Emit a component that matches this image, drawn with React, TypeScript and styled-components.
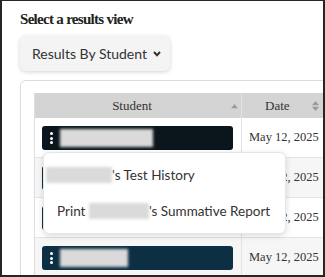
import React from "react";
import styled, { createGlobalStyle } from "styled-components";

const Global = createGlobalStyle`
  html, body { margin: 0; padding: 0; background: #fff; }
  * { box-sizing: border-box; }
`;

const Frame = styled.div`
  width: 325px;
  height: 277px;
  overflow: hidden;
  border-style: solid;
  border-color: #262626;
  border-width: 1px 2px 2px 2px;
  background: #fff;
  padding: 9px 0 0 18px;
  position: relative;
`;

const Heading = styled.h2`
  margin: 0;
  font-family: "Liberation Serif", "Times New Roman", serif;
  font-weight: 700;
  font-size: 15px;
  letter-spacing: -0.7px;
  line-height: 18px;
  color: #222;
`;

const ViewButton = styled.button`
  margin-top: 8px;
  width: 150px;
  height: 35px;
  display: flex;
  align-items: center;
  gap: 6px;
  padding: 0 0 0 12px;
  border: none;
  border-radius: 6px;
  background: #f4f4f4;
  box-shadow: 0 1px 4px rgba(0, 0, 0, 0.18);
  font-family: Lato, "Open Sans", sans-serif;
  font-size: 14px;
  color: #333;
`;

const Card = styled.div`
  margin-top: 9px;
  width: 340px;
  border: 1px solid #dcdcdc;
  border-radius: 6px;
  padding: 12px 0 0 13px;
  height: 260px;
`;

const Table = styled.div`
  border-left: 1px solid #dedede;
  width: 320px;
`;

const HeaderRow = styled.div`
  display: grid;
  grid-template-columns: 207px 100px;
  height: 25px;
  background: #d4d4d4;
`;

const HeadCell = styled.div<{ $pad: number }>`
  position: relative;
  display: flex;
  align-items: center;
  justify-content: ${(p) => (p.$pad ? "flex-start" : "center")};
  padding-left: ${(p) => p.$pad}px;
  padding-right: ${(p) => (p.$pad ? 0 : 12)}px;
  border-right: 1px solid #e4e4e4;
  font-family: "Liberation Serif", "Times New Roman", serif;
  font-size: 13px;
  color: #333;
`;

const SortIcon = styled.svg<{ $left: number }>`
  position: absolute;
  left: ${(p) => p.$left}px;
  top: 50%;
  transform: translateY(-50%);
`;

const Row = styled.div<{ $striped?: boolean }>`
  display: grid;
  grid-template-columns: 207px 100px;
  height: 40px;
  border-bottom: 1px solid #e3e3e3;
  background: ${(p) => (p.$striped ? "#f6f6f6" : "#fff")};
`;

const StudentCell = styled.div`
  position: relative;
  padding: 8px 8px 0 7px;
  border-right: 1px solid #e3e3e3;
`;

const DateCell = styled.div`
  display: flex;
  align-items: center;
  padding-left: 7px;
  font-family: "Liberation Serif", "Times New Roman", serif;
  font-size: 12.5px;
  color: #333;
`;

const StudentButton = styled.div<{ $active?: boolean }>`
  width: 191px;
  height: 24px;
  border-radius: 3px;
  background: ${(p) => (p.$active ? "#0a161c" : "#0d2f43")};
  display: flex;
  align-items: center;
  padding-left: 8px;
  gap: 7px;
`;

const Dots = styled.span`
  display: flex;
  flex-direction: column;
  gap: 1.5px;
  & > i {
    display: block;
    width: 3px;
    height: 3px;
    border-radius: 50%;
    background: #fff;
  }
`;

const Blur = styled.span<{ $w: number; $h: number; $shift?: number }>`
  display: inline-block;
  width: ${(p) => p.$w}px;
  height: ${(p) => p.$h}px;
  margin-left: ${(p) => p.$shift ?? 0}px;
  background: #dadada;
  filter: blur(1.6px);
  vertical-align: middle;
`;

const Menu = styled.div`
  position: absolute;
  left: 8px;
  top: 34px;
  width: 243px;
  padding: 4px 0;
  background: #fff;
  border: 1px solid #e6e6e6;
  border-radius: 6px;
  box-shadow: 0 2px 6px rgba(0, 0, 0, 0.14);
  z-index: 2;
`;

const MenuItem = styled.div`
  height: 36px;
  display: flex;
  align-items: center;
  padding-left: 13px;
  white-space: nowrap;
  font-family: Lato, "Open Sans", sans-serif;
  font-size: 13.5px;
  color: #333;
`;

const rows = [
  { active: true, w: 93, menu: true },
  { active: false, w: 93 },
  { active: false, w: 93 },
  { active: false, w: 68 },
];

export default function App() {
  return (
    <>
      <Global />
      <Frame>
        <Heading>Select a results view</Heading>
        <ViewButton>
          Results By Student
          <svg width="8" height="6" viewBox="0 0 8 6">
            <polyline points="1,1 4,4.2 7,1" fill="none" stroke="#333" strokeWidth="2" />
          </svg>
        </ViewButton>
        <Card>
          <Table>
            <HeaderRow>
              <HeadCell $pad={0}>
                Student
                <SortIcon $left={196} width="7" height="5" viewBox="0 0 7 5">
                  <polygon points="0,5 3.5,0.5 7,5" fill="#9a9a9a" />
                </SortIcon>
              </HeadCell>
              <HeadCell $pad={23}>
                Date
                <SortIcon $left={70} width="7" height="10" viewBox="0 0 7 10">
                  <polygon points="0,4.2 3.5,0 7,4.2" fill="#9a9a9a" />
                  <polygon points="0,5.8 3.5,10 7,5.8" fill="#9a9a9a" />
                </SortIcon>
              </HeadCell>
            </HeaderRow>
            {rows.map((r, i) => (
              <Row key={i} $striped={i % 2 === 1}>
                <StudentCell>
                  <StudentButton $active={r.active}>
                    <Dots>
                      <i />
                      <i />
                      <i />
                    </Dots>
                    <Blur $w={r.w} $h={18} />
                  </StudentButton>
                  {r.menu && (
                    <Menu>
                      <MenuItem>
                        <Blur $w={66} $h={16} $shift={-11} />
                        's Test History
                      </MenuItem>
                      <MenuItem>
                        Print&nbsp;
                        <Blur $w={60} $h={16} />
                        's Summative Report
                      </MenuItem>
                    </Menu>
                  )}
                </StudentCell>
                <DateCell>May 12, 2025</DateCell>
              </Row>
            ))}
          </Table>
        </Card>
      </Frame>
    </>
  );
}
